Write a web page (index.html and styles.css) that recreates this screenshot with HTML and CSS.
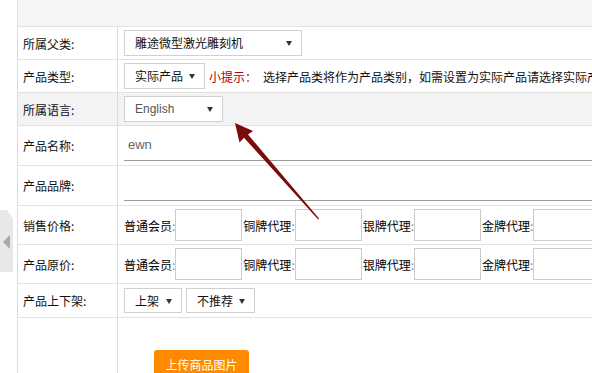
FILE: index.html
```html
<!DOCTYPE html>
<html lang="zh-CN">
<head>
  <meta charset="UTF-8" />
  <title>编辑产品</title>
  <link rel="stylesheet" href="styles.css">
</head>
<body>

<div class="side-tab"><span class="side-arrow"></span></div>

<div class="form">
  <div class="topbar"></div>

  <div class="row h32">
    <div class="label">所属父类:</div>
    <div class="value">
      <span class="sel w178">雕途微型激光雕刻机</span>
    </div>
  </div>

  <div class="row h32">
    <div class="label">产品类型:</div>
    <div class="value">
      <span class="sel w81">实际产品</span>
      <span class="tip">小提示：</span>
      <span class="tip-text">选择产品类将作为产品类别，如需设置为实际产品请选择实际产品</span>
    </div>
  </div>

  <div class="row h32 hover">
    <div class="label">所属语言:</div>
    <div class="value">
      <span class="sel w99 en">English</span>
    </div>
  </div>

  <div class="row h39">
    <div class="label">产品名称:</div>
    <div class="value top">
      <input class="line-input" type="text" value="ewn">
    </div>
  </div>

  <div class="row h39">
    <div class="label">产品品牌:</div>
    <div class="value top">
      <input class="line-input" type="text" value="">
    </div>
  </div>

  <div class="row h38">
    <div class="label">销售价格:</div>
    <div class="value">
      <span class="plabel">普通会员<i>:</i></span><input class="price" type="text">
      <span class="plabel">铜牌代理<i>:</i></span><input class="price" type="text">
      <span class="plabel">银牌代理<i>:</i></span><input class="price" type="text">
      <span class="plabel">金牌代理<i>:</i></span><input class="price" type="text">
    </div>
  </div>

  <div class="row h38">
    <div class="label">产品原价:</div>
    <div class="value">
      <span class="plabel">普通会员<i>:</i></span><input class="price" type="text">
      <span class="plabel">铜牌代理<i>:</i></span><input class="price" type="text">
      <span class="plabel">银牌代理<i>:</i></span><input class="price" type="text">
      <span class="plabel">金牌代理<i>:</i></span><input class="price" type="text">
    </div>
  </div>

  <div class="row h33">
    <div class="label">产品上下架:</div>
    <div class="value">
      <span class="sel w58 small">上架</span>
      <span class="sel w69 small">不推荐</span>
    </div>
  </div>

  <div class="row last">
    <div class="label"></div>
    <div class="value upload">
      <button class="upload-btn">上传商品图片</button>
    </div>
  </div>
</div>

<!-- red pointer arrow drawn over the form -->
<svg class="pointer" width="592" height="373" viewBox="0 0 592 373">
  <polygon points="235,123 253,131 248,134.5 319,218.6 318.2,219.4 244,137.8 239.5,142.5" fill="#7b0a0a"/>
</svg>

</body>
</html>
```

FILE: styles.css
```css
body { margin: 0; font-family: "Noto Sans CJK SC", "Liberation Sans", sans-serif; font-size: 12px; color: #111; background: #fff; overflow: hidden; width: 592px; height: 373px; position: relative; }
.form { margin-left: 17px; border-left: 1px solid #dcdcdc; width: 1000px; }
.topbar { height: 26px; background: #f5f5f5; border-bottom: 1px solid #e2e2e2; }
.row { display: flex; border-bottom: 1px solid #e2e2e2; white-space: nowrap; }
.row.hover { background: #f3f3f3; }
.h32 { height: 32px; }
.h33 { height: 33px; }
.h38 { height: 38px; }
.h39 { height: 39px; }
.row.last { height: 80px; border-bottom: none; }
.label { width: 94px; padding-left: 5px; border-right: 1px solid #dcdcdc; display: flex; align-items: center; color: #111; flex-shrink: 0; }
.value { flex: 1; display: flex; align-items: center; padding-left: 6px; }
.value.top { align-items: flex-start; }
.sel { position: relative; box-sizing: border-box; height: 26px; line-height: 24px; border: 1px solid #d0d0d0; background: #fff; padding-left: 10px; color: #111; display: inline-block; }
.sel::after { content: ""; position: absolute; right: 9px; top: 10px; border-left: 3px solid transparent; border-right: 3px solid transparent; border-top: 5px solid #333; }
.sel.en { font-family: "Liberation Sans", sans-serif; color: #555; }
.sel.small { height: 25px; line-height: 23px; margin-right: 4px; }
.w178 { width: 178px; }
.w81 { width: 81px; }
.w99 { width: 99px; }
.w58 { width: 58px; }
.w69 { width: 69px; }
.tip { color: #b00000; margin-left: 4px; }
.tip-text { margin-left: 6px; }
.line-input { box-sizing: border-box; margin-top: 3px; height: 32px; width: 520px; border: none; border-bottom: 1px solid #999; padding: 0 4px; font-family: "Liberation Sans", sans-serif; font-size: 13px; color: #666; background: transparent; outline: none; }
.plabel { color: #000; }
.plabel i { font-style: normal; color: #888; }
.price { box-sizing: border-box; width: 67px; height: 32px; border: 1px solid #ccc; margin: 0 1px 0 0; padding: 0 4px; }
.upload { align-items: flex-start; padding-left: 36px; }
.upload-btn { margin-top: 32px; width: 95px; height: 28px; border: none; border-radius: 3px; background: #ff8a00; color: #fff; font-family: "Noto Sans CJK SC", sans-serif; font-size: 12px; padding: 0; }
.side-tab { position: absolute; left: 0; top: 210px; width: 13px; height: 62px; background: #e8e8e8; clip-path: polygon(0 0, 55% 0, 100% 14%, 100% 100%, 0 100%); }
.side-arrow { position: absolute; left: 3px; top: 25px; border-top: 7px solid transparent; border-bottom: 7px solid transparent; border-right: 7px solid #a8a8a8; }
.pointer { position: absolute; left: 0; top: 0; pointer-events: none; }
```
